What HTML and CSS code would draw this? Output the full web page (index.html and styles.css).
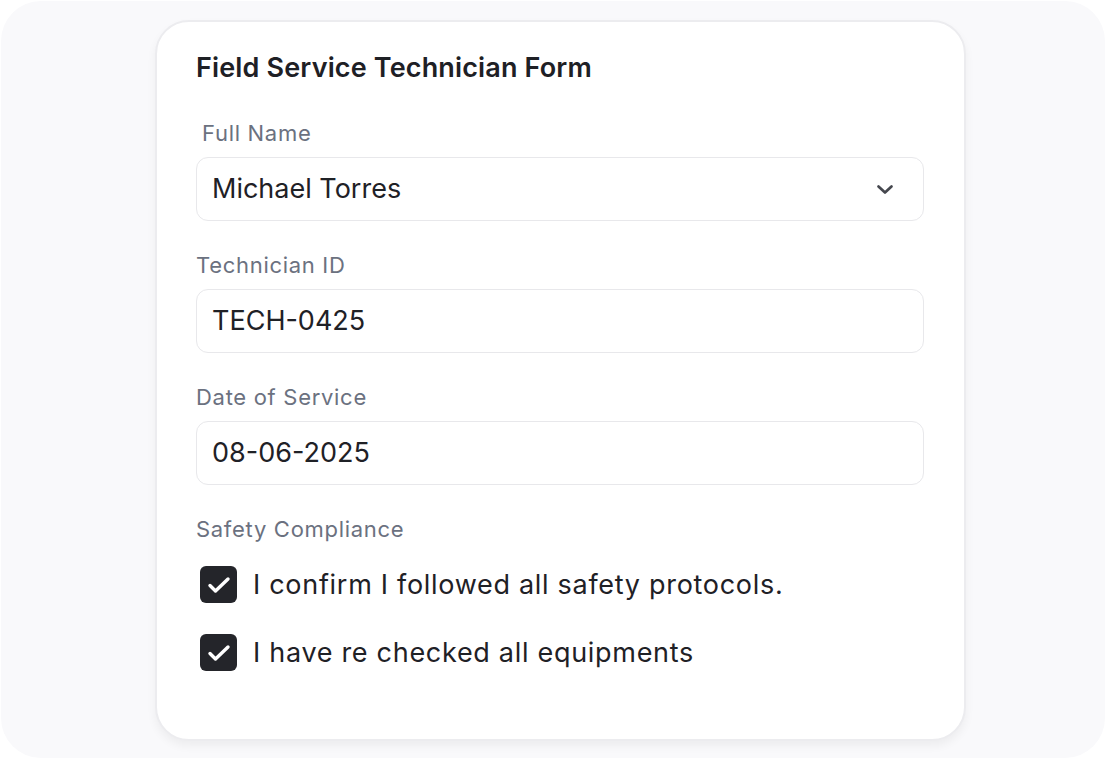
FILE: index.html
```html
<!DOCTYPE html>
<html lang="en">
<head>
<meta charset="utf-8">
<title>Field Service Technician Form</title>
<link rel="stylesheet" href="styles.css">
</head>
<body>
<div class="frame">
  <form class="card">
    <h1 class="title">Field Service Technician Form</h1>

    <div class="field">
      <label class="label label-indent">Full Name</label>
      <div class="input select">
        <span class="value">Michael Torres</span>
        <svg class="chevron" width="20" height="20" viewBox="0 0 20 20" fill="none"><path d="M3.5 7.5l6.5 6 6.5-6" stroke="#45474e" stroke-width="2.7" stroke-linecap="round" stroke-linejoin="round"/></svg>
      </div>
    </div>

    <div class="field">
      <label class="label">Technician ID</label>
      <div class="input"><span class="value">TECH-0425</span></div>
    </div>

    <div class="field">
      <label class="label">Date of Service</label>
      <div class="input"><span class="value">08-06-2025</span></div>
    </div>

    <div class="field compliance">
      <span class="label">Safety Compliance</span>
      <div class="checks">
        <div class="check">
          <span class="box"><svg class="tick" width="26" height="26" viewBox="0 0 26 26" fill="none"><path d="M4 13.5l5.5 5.5L22 7" stroke="#fff" stroke-width="3.4" stroke-linecap="round" stroke-linejoin="round"/></svg></span>
          <span class="check-text">I confirm I followed all safety protocols.</span>
        </div>
        <div class="check">
          <span class="box"><svg class="tick" width="26" height="26" viewBox="0 0 26 26" fill="none"><path d="M4 13.5l5.5 5.5L22 7" stroke="#fff" stroke-width="3.4" stroke-linecap="round" stroke-linejoin="round"/></svg></span>
          <span class="check-text">I have re checked all equipments</span>
        </div>
      </div>
    </div>
  </form>
</div>
</body>
</html>
```

FILE: styles.css
```css
* { box-sizing: border-box; }
html, body { margin: 0; padding: 0; background: #ffffff; }
body {
  font-family: Inter, "Noto Sans", "Liberation Sans", sans-serif;
  width: 1106px;
  height: 759px;
  overflow: hidden;
}
.frame {
  margin: 1px;
  height: 757px;
  background: #f9f9fb;
  border-radius: 40px;
  padding-top: 19px;
  padding-left: 154px;
}
.card {
  width: 811px;
  height: 721px;
  background: #ffffff;
  border: 2px solid #ececef;
  border-radius: 34px;
  box-shadow: 0 5px 10px rgba(0, 0, 0, 0.05);
  padding: 30px 40px 0 39px;
  display: flex;
  flex-direction: column;
}
.title {
  margin: 0 0 35px 0;
  font-size: 27px;
  line-height: 32px;
  font-weight: 600;
  color: #1e2025;
  letter-spacing: 0.15px;
}
.field {
  display: flex;
  flex-direction: column;
  gap: 10px;
  margin-bottom: 30px;
}
.label {
  font-size: 22px;
  line-height: 28px;
  color: #6b7180;
  font-weight: 400;
  letter-spacing: 0.7px;
}
.label-indent { padding-left: 6px; }
.input {
  height: 64px;
  border: 1.5px solid #e8e8eb;
  border-radius: 12px;
  display: flex;
  align-items: center;
  padding: 0 28px 0 15px;
}
.select { justify-content: space-between; }
.value {
  font-size: 27px;
  color: #1f2126;
  line-height: 32px;
}
.chevron { flex: none; }
.compliance { gap: 23px; }
.checks {
  display: flex;
  flex-direction: column;
  gap: 31px;
}
.check {
  display: flex;
  align-items: center;
  gap: 16px;
  padding-left: 4px;
}
.box {
  width: 37px;
  height: 37px;
  border-radius: 6px;
  background: #24252a;
  display: flex;
  align-items: center;
  justify-content: center;
  flex: none;
}
.tick { flex: none; }
.check-text {
  font-size: 27px;
  line-height: 32px;
  color: #1f2126;
  letter-spacing: 0.7px;
}
```
